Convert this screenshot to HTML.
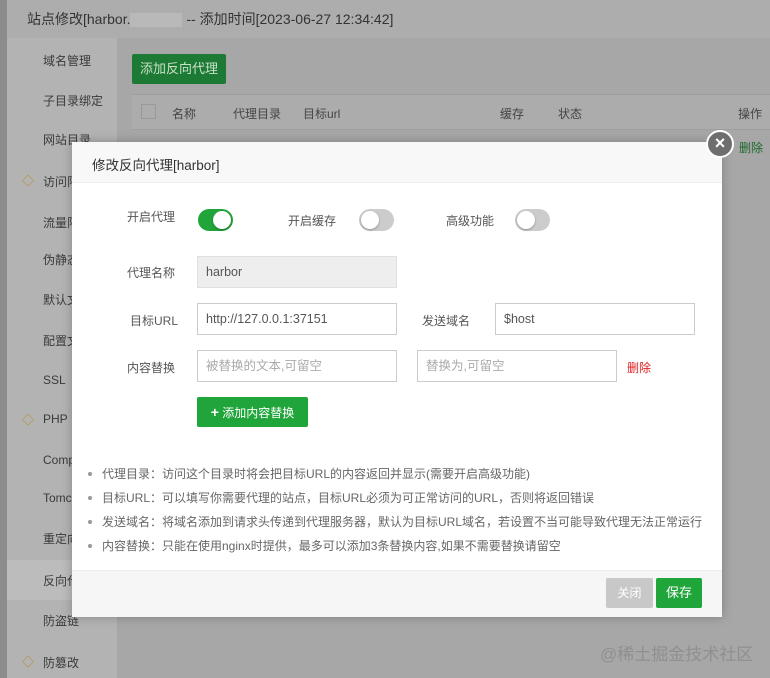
<!DOCTYPE html>
<html><head><meta charset="utf-8"><style>
*{margin:0;padding:0;box-sizing:border-box}
body{width:770px;height:678px;position:relative;overflow:hidden;background:#a7a7a7;font-family:"Liberation Sans","Noto Sans CJK SC",sans-serif;font-size:12px;color:#333}
.a{position:absolute}
.side div{position:absolute;left:36px;font-size:12px;color:#3a3a3a}
.lbl{position:absolute;font-size:12px;color:#555;text-align:right}
.inp{position:absolute;height:32px;border:1px solid #ccc;background:#fff;padding-left:8px;line-height:30px;font-size:12.5px;color:#555}
.tg{position:absolute;width:35px;height:22px;border-radius:11px}
.tg i{position:absolute;top:2px;width:18px;height:18px;border-radius:50%;background:#fff;box-shadow:0 1px 2px rgba(0,0,0,.3)}
ul.tips{position:absolute;left:88px;top:462px;list-style:none}
ul.tips li{font-size:12px;color:#666;height:24px;line-height:24px;position:relative;padding-left:14px;white-space:nowrap}
ul.tips li:before{content:"";position:absolute;left:0;top:10px;width:4px;height:4px;border-radius:50%;background:#999}
</style></head><body>
<div class="a" style="left:0;top:0;width:7px;height:678px;background:#8c8c8c"></div>
<div class="a" style="left:7px;top:0;width:763px;height:38px;background:#adadad"></div>
<div class="a" style="left:27px;top:9px;font-size:14px;color:#333">站点修改[harbor.<span style="display:inline-block;width:52px;height:14px;background:#b9b9b9;vertical-align:middle"></span> -- 添加时间[2023-06-27 12:34:42]</div>
<div class="a side" style="left:7px;top:38px;width:110px;height:640px;background:#b3b3b3">
<div style="top:14px">域名管理</div><div style="top:54px">子目录绑定</div><div style="top:93px">网站目录</div>
<div style="top:135px">访问限制</div><div style="top:176px">流量限制</div><div style="top:213px">伪静态</div>
<div style="top:253px">默认文档</div><div style="top:294px">配置文件</div><div style="top:335px">SSL</div>
<div style="top:374px">PHP</div><div style="top:415px">Composer</div><div style="top:453px">Tomcat</div>
<div style="top:492px">重定向</div>
<div style="top:522px;left:0;width:110px;height:40px;background:#bcbcbc"></div>
<div style="top:534px">反向代理</div><div style="top:574px">防盗链</div><div style="top:616px">防篡改</div>
<span style="position:absolute;left:15px;top:134px;color:#b08a20;font-size:12px">◇</span>
<span style="position:absolute;left:15px;top:373px;color:#b08a20;font-size:12px">◇</span>
<span style="position:absolute;left:15px;top:615px;color:#b08a20;font-size:12px">◇</span>
</div>
<div class="a" style="left:132px;top:54px;width:94px;height:30px;background:#1c7a34;border-radius:2px;color:#c8e0c8;font-size:13px;line-height:30px;text-align:center">添加反向代理</div>
<div class="a" style="left:132px;top:94px;width:638px;height:36px;border-top:1px solid #9e9e9e;border-bottom:1px solid #9e9e9e;background:#acacac"></div>
<div class="a" style="left:141px;top:104px;width:15px;height:15px;border:1px solid #999"></div>
<div class="a" style="top:105px;left:172px;color:#444">名称</div>
<div class="a" style="top:105px;left:233px;color:#444">代理目录</div>
<div class="a" style="top:105px;left:303px;color:#444">目标url</div>
<div class="a" style="top:105px;left:500px;color:#444">缓存</div>
<div class="a" style="top:105px;left:558px;color:#444">状态</div>
<div class="a" style="top:105px;left:738px;color:#444">操作</div>
<div class="a" style="top:139px;left:739px;color:#1c6a2c">删除</div>
<div class="a" style="left:600px;top:640px;font-size:17px;color:#8f8f8f">@稀土掘金技术社区</div>

<div class="a" style="left:72px;top:142px;width:650px;height:475px;background:#fff;box-shadow:0 0 10px rgba(0,0,0,.25)">
<div class="a" style="left:0;top:0;width:650px;height:41px;background:#f8f8f8;border-bottom:1px solid #eee"></div>
<div class="a" style="left:20px;top:12px;font-size:13.5px;color:#333">修改反向代理[harbor]</div>
<div class="a" style="left:0;top:428px;width:650px;height:47px;background:#f6f6f6;border-top:1px solid #eee"></div>
<div class="a" style="left:534px;top:436px;width:47px;height:30px;background:#c8c8c8;border-radius:2px;color:#fff;line-height:30px;text-align:center">关闭</div>
<div class="a" style="left:584px;top:436px;width:46px;height:30px;background:#20a53a;border-radius:2px;color:#fff;line-height:30px;text-align:center;font-size:13px">保存</div>
</div>
<div class="a" style="left:706px;top:130px;width:28px;height:28px;border-radius:50%;background:#6e6e6e;border:2px solid #fff;color:#fff;font-size:18px;line-height:23px;text-align:center;font-weight:bold">×</div>

<div class="lbl" style="left:127px;top:208px">开启代理</div>
<div class="tg" style="left:198px;top:209px;background:#20a53a"><i style="left:15px"></i></div>
<div class="lbl" style="left:288px;top:212px">开启缓存</div>
<div class="tg" style="left:359px;top:209px;background:#ccc"><i style="left:2px"></i></div>
<div class="lbl" style="left:446px;top:212px">高级功能</div>
<div class="tg" style="left:515px;top:209px;background:#ccc"><i style="left:2px"></i></div>

<div class="lbl" style="left:127px;top:264px">代理名称</div>
<div class="inp" style="left:197px;top:256px;width:200px;background:#eee;border-color:#e0e0e0">harbor</div>
<div class="lbl" style="left:130px;top:312px">目标URL</div>
<div class="inp" style="left:197px;top:303px;width:200px">http://127.0.0.1:37151</div>
<div class="lbl" style="left:422px;top:312px">发送域名</div>
<div class="inp" style="left:495px;top:303px;width:200px">$host</div>
<div class="lbl" style="left:127px;top:359px">内容替换</div>
<div class="inp" style="left:197px;top:350px;width:200px;color:#aaa">被替换的文本,可留空</div>
<div class="inp" style="left:417px;top:350px;width:200px;color:#aaa">替换为,可留空</div>
<div class="a" style="left:627px;top:359px;color:#e02020">删除</div>
<div class="a" style="left:197px;top:397px;width:111px;height:30px;background:#20a53a;border-radius:2px;color:#fff;line-height:30px;text-align:center;font-size:12px"><b style="font-size:14px">+</b> 添加内容替换</div>

<ul class="tips">
<li>代理目录：访问这个目录时将会把目标URL的内容返回并显示(需要开启高级功能)</li>
<li>目标URL：可以填写你需要代理的站点，目标URL必须为可正常访问的URL，否则将返回错误</li>
<li>发送域名：将域名添加到请求头传递到代理服务器，默认为目标URL域名，若设置不当可能导致代理无法正常运行</li>
<li>内容替换：只能在使用nginx时提供，最多可以添加3条替换内容,如果不需要替换请留空</li>
</ul>
</body></html>
